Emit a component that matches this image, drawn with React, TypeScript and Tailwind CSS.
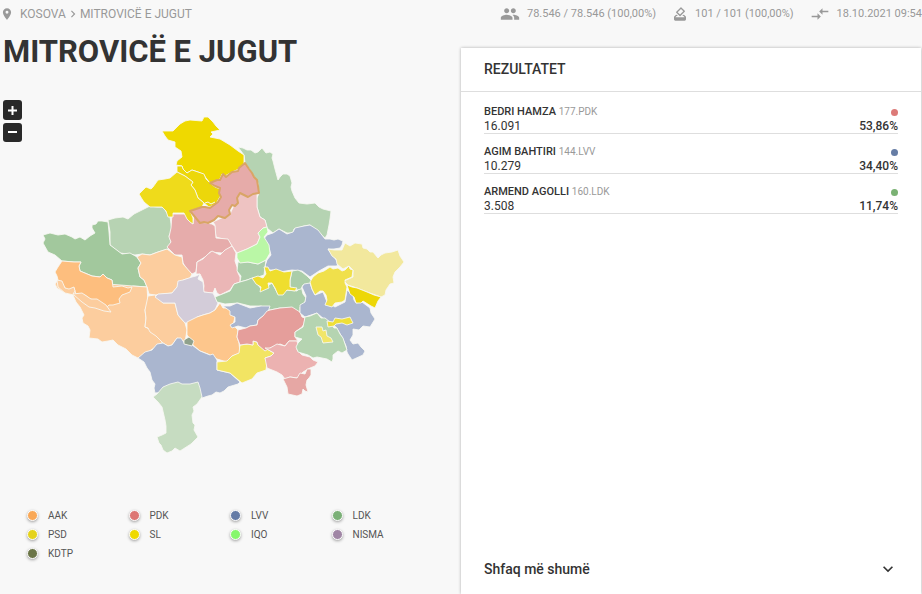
import { clsx } from 'clsx';
import { MdChevronRight, MdCompareArrows, MdExpandMore, MdHowToVote, MdPeople, MdPlace } from 'react-icons/md';

// ─────────────────────────────────────────────────────────────────────────────
// Data
// ─────────────────────────────────────────────────────────────────────────────

const STATS = [
  { icon: MdPeople, text: '78.546 / 78.546 (100,00%)', size: 'size-5' },
  { icon: MdHowToVote, text: '101 / 101 (100,00%)', size: 'size-4' },
  { icon: MdCompareArrows, text: '18.10.2021 09:54', size: 'size-5' },
];

const RESULTS = [
  { name: 'BEDRI HAMZA', list: '177.PDK', votes: '16.091', share: '53,86%', dot: 'bg-[#dc7a78]' },
  { name: 'AGIM BAHTIRI', list: '144.LVV', votes: '10.279', share: '34,40%', dot: 'bg-[#667da5]' },
  { name: 'ARMEND AGOLLI', list: '160.LDK', votes: '3.508', share: '11,74%', dot: 'bg-[#7bb274]' },
];

const PARTIES = [
  { label: 'AAK', dot: 'bg-[#f9a857]' },
  { label: 'PDK', dot: 'bg-[#dd7674]' },
  { label: 'LVV', dot: 'bg-[#647ba6]' },
  { label: 'LDK', dot: 'bg-[#7bb077]' },
  { label: 'PSD', dot: 'bg-[#e5d31c]' },
  { label: 'SL', dot: 'bg-[#efd900]' },
  { label: 'IQO', dot: 'bg-[#86f76c]' },
  { label: 'NISMA', dot: 'bg-[#a086a5]' },
  { label: 'KDTP', dot: 'bg-[#6b7547]' },
];

// Drawn in order: later shapes cover the edges of earlier ones.
const REGIONS = [
  { name: 'Podujevë', fill: '#b5d3b2', points: '238,147 243,148 247,150 251,150 255,153 258,152 262,148 266,153 270,152 273,154 272,158 273,161 275,169 278,180 280,177 283,174 287,174 290,176 292,183 291,187 292,191 295,198 299,203 307,204 315,203 319,207 323,209 331,211 330,219 329,225 327,235 325,238 310,225 304,226 294,229 293,233 287,233 279,229 273,233 267,228 265,220 260,217 257,207 257,198 259,193 258,183 250,170 245,163 244,155' },
  { name: 'Vushtrri', fill: '#eec3c2', points: '213,222 215,225 215,230 216,237 223,239 228,240 232,246 237,253 247,249 257,244 260,237 258,233 263,228 267,227 265,220 260,217 257,207 257,198 257,192 240,192 230,214' },
  { name: 'Istog', fill: '#b7d3b3', points: '108,220 115,218 123,217 128,219 134,214 142,210 150,206 157,207 163,207 167,213 170,217 172,230 169,236 171,242 168,249 158,252 150,255 142,254 135,255 120,253 110,245 110,232' },
  { name: 'Skenderaj', fill: '#e6acab', points: '172,214 185,214 188,220 193,224 194,214 200,222 212,224 215,226 216,238 228,239 232,246 228,249 222,253 210,252 208,255 197,262 196,272 192,274 187,269 183,263 182,255 175,255 170,250 167,247 171,242 169,237 171,228' },
  { name: 'Drenas', fill: '#ebb6b6', points: '197,262 203,259 208,254 212,251 220,255 225,250 232,246 236,253 235,261 237,267 238,273 240,277 240,282 234,284 230,290 220,295 217,293 215,288 213,293 203,292 204,286 203,280 200,274 196,274' },
  { name: 'Pejë', fill: '#a2c89d', points: '43,235 50,233 58,235 65,234 72,237 75,239 80,237 85,240 90,236 95,233 92,228 92,225 96,224 98,221 102,221 108,222 109,232 110,245 122,254 130,253 137,257 141,263 138,268 140,277 144,280 147,287 133,286 128,288 122,286 113,287 112,280 107,278 103,274 100,277 92,276 80,271 79,266 81,262 74,262 62,261 55,255 48,252 43,243 45,239' },
  { name: 'Klinë', fill: '#fccd9e', points: '137,257 142,254 150,255 158,252 167,249 171,252 175,255 182,257 183,264 192,274 190,278 183,280 172,293 155,295 149,294 147,287 144,280 140,277 138,268 141,263' },
  { name: 'Gjakovë', fill: '#fccd9e', points: '58,280 55,284 57,288 65,293 73,295 76,302 80,307 84,315 82,318 83,323 88,326 90,330 89,338 98,339 102,342 108,341 113,340 118,345 126,349 132,355 138,358 148,352 160,344 163,342 152,330 145,327 146,318 145,310 148,302 147,287 133,286' },
  { name: 'Deçan', fill: '#fdbe7e', points: '62,261 74,262 81,262 79,266 80,271 92,276 100,277 103,274 107,278 112,280 113,287 122,286 128,288 132,287 130,292 122,295 119,299 120,303 113,305 109,305 107,307 101,303 95,300 90,299 85,295 76,294 74,288 67,291 63,285 58,280 57,276 55,272 58,267' },
  { name: 'Junik', fill: '#fccd9e', points: '57,280 62,281 65,288 69,289 74,287 75,291 73,294 82,293 91,299 97,299 106,305 111,312 104,311 95,308 89,307 82,302 74,295 65,293 58,287' },
  { name: 'Rahovec', fill: '#fccd9e', points: '148,296 155,295 163,303 175,303 178,315 185,323 187,330 185,342 177,338 172,345 168,346 163,343 156,336 150,332 148,328 145,327 146,318 145,310' },
  { name: 'Malishevë', fill: '#d3ccd9', points: '200,274 198,279 203,282 204,292 213,293 215,297 218,303 215,310 210,313 203,315 197,317 194,321 190,323 185,323 178,315 175,303 163,303 155,297 158,294 172,293 177,287 178,281 183,280 192,277 196,276' },
  { name: 'Suharekë', fill: '#fdc68c', points: '187,322 197,317 203,315 210,313 215,310 220,303 223,308 230,308 235,317 233,325 238,330 237,337 239,343 240,353 232,356 227,362 217,359 208,354 200,351 193,345 192,341 187,335' },
  { name: 'Prizren', fill: '#aab6cf', points: '138,358 145,352 152,350 157,344 163,343 168,346 172,345 177,338 181,338 185,344 192,345 200,351 210,355 213,354 217,360 217,370 230,373 240,382 238,384 228,387 224,391 220,393 216,392 212,395 208,396 202,398 198,390 155,393 154,388 155,384 152,380 150,372 147,368 144,362' },
  { name: 'Mamushë', fill: '#8fa18c', points: '184,340 189,337 194,341 192,346 184,344' },
  { name: 'Dragash', fill: '#c6dcc1', points: '153,397 157,394 163,387 170,384 178,382 182,384 190,384 198,382 200,388 202,397 197,404 193,407 194,411 192,415 193,423 195,425 194,430 198,437 191,444 180,451 175,448 172,451 167,453 163,450 161,445 159,443 157,437 162,435 166,433 166,426 165,420 162,407 158,402' },
  { name: 'Shtërpcë', fill: '#f2e463', points: '217,362 227,361 232,356 239,353 240,345 248,344 253,345 253,341 257,342 258,345 265,348 274,353 271,356 265,358 267,362 266,370 260,372 257,373 252,379 242,383 230,373 217,370' },
  { name: 'Prishtinë', fill: '#aab6cf', points: '263,240 267,235 273,233 279,229 287,234 293,232 295,228 304,226 310,225 318,230 325,239 330,239 334,240 338,239 343,241 342,245 340,248 334,249 328,249 333,256 338,262 337,266 328,266 319,271 310,277 302,271 292,270 286,271 280,272 273,270 267,270 265,266 267,260 271,255 269,248' },
  { name: 'Kamenicë', fill: '#f2e89d', points: '328,249 334,250 342,250 345,243 350,246 355,243 362,244 363,248 367,249 370,252 373,252 378,258 381,255 385,253 392,252 398,250 400,256 404,262 400,267 395,272 393,277 394,283 390,284 386,290 385,295 381,297 367,292 357,288 348,285 344,281 353,277 353,270 349,266 343,269 337,264 336,259 332,256' },
  { name: 'Fushë Kosovë', fill: '#abcda9', points: '238,262 248,262 258,264 266,260 265,267 264,275 258,277 253,278 247,280 240,282 241,276 237,271' },
  { name: 'Lipjan', fill: '#abcda9', points: '215,297 220,295 230,291 234,284 240,282 247,280 252,278 258,285 262,290 272,283 278,294 287,290 297,291 301,286 303,294 306,298 305,302 300,307 300,312 296,311 292,308 280,308 270,310 261,306 250,306 238,303 225,304 217,302' },
  { name: 'Janjevë', fill: '#abcda9', points: '292,271 298,270 302,272 307,276 312,281 308,285 303,285 301,289 297,290 290,287 290,280' },
  { name: 'Graçanicë', fill: '#efde2e', points: '252,278 258,276 263,278 266,274 264,267 268,267 270,271 276,269 284,272 292,271 290,280 290,287 297,288 295,291 287,290 283,295 278,295 275,288 272,283 268,283 269,288 260,292 261,287 256,284' },
  { name: 'Obiliq', fill: '#baf7a6', points: '237,253 247,249 257,244 260,237 258,233 263,228 267,227 268,232 264,237 269,245 270,253 266,260 258,264 248,262 240,263 237,258' },
  { name: 'Shtime', fill: '#aab6cf', points: '223,306 230,306 237,303 250,308 261,306 270,306 268,312 263,316 258,320 257,325 250,326 246,328 238,326 232,328 230,325 235,322 235,317 230,315 230,311' },
  { name: 'Ferizaj', fill: '#e59e9b', points: '238,330 246,328 250,326 257,325 258,320 263,316 267,311 270,310 280,308 292,307 300,312 302,317 305,318 304,324 302,327 295,332 295,337 298,341 289,341 285,346 280,344 270,348 265,351 258,345 257,342 253,341 253,345 247,344 240,345 237,337' },
  { name: 'Kaçanik', fill: '#ecb2b1', points: '274,353 265,348 270,348 277,344 285,346 289,341 297,341 298,345 297,350 302,355 310,357 313,360 318,362 315,366 310,368 303,372 297,378 290,377 285,379 282,375 277,372 267,368 265,358 271,356' },
  { name: 'Hani i Elezit', fill: '#e6a7a4', points: '283,379 290,377 297,378 300,373 305,374 307,369 311,369 311,375 309,378 307,380 306,385 308,392 305,391 303,389 302,394 297,396 288,394 287,387' },
  { name: 'Gjilan', fill: '#aab6cf', points: '302,287 304,284 310,283 312,289 315,295 323,292 327,302 335,307 345,302 347,290 353,295 354,300 356,303 362,302 370,308 371,313 375,319 370,327 363,326 359,330 353,329 353,335 350,340 353,344 358,343 361,347 365,351 363,355 352,360 348,354 347,352 346,346 342,337 336,327 325,320 317,313 305,317 300,313 300,305 305,302 306,296' },
  { name: 'Novobërdë', fill: '#f0e04b', points: '310,282 313,277 318,273 324,271 330,267 333,269 338,268 342,271 345,270 349,266 350,269 353,270 352,277 345,280 345,283 347,287 345,300 342,302 335,303 332,307 325,305 327,300 326,295 323,291 320,291 315,295 312,289' },
  { name: 'Ranillug', fill: '#edd707', points: '347,285 352,287 357,288 367,292 374,295 381,297 378,301 375,308 371,306 363,301 361,303 356,303 354,297 350,294' },
  { name: 'Viti', fill: '#b5d4b1', points: '305,317 310,316 317,313 321,318 325,318 330,322 334,328 337,328 340,334 343,338 345,344 347,350 342,353 338,351 333,355 333,359 332,362 327,359 317,357 313,358 308,355 298,352 296,347 298,343 302,339 295,337 295,332 303,327' },
  { name: 'Kllokot', fill: '#f2e669', points: '316,327 322,327 323,331 326,330 327,336 331,338 333,342 323,343 321,337 318,335' },
  { name: 'Partesh', fill: '#efdf38', points: '327,321 333,322 335,318 342,319 350,317 353,323 347,325 342,323 336,324 334,326 328,327' },
  { name: 'Leposaviq', fill: '#efd900', points: '162,131 173,131 180,124 185,121 190,120 202,121 204,117 208,117 213,122 216,126 220,130 211,132 213,134 210,137 220,139 230,145 238,151 244,155 244,163 239,169 232,172 225,176 222,174 220,179 210,183 206,178 203,174 198,172 192,170 187,173 183,169 182,166 176,165 177,161 182,157 181,151 175,147 175,142 168,140 165,136' },
  { name: 'Zveçan', fill: '#ecd70a', points: '177,166 182,166 183,169 187,173 192,170 198,172 204,174 206,179 210,183 215,187 220,189 221,195 217,202 214,205 209,207 204,203 198,198 195,190 191,185 193,182 185,176 177,172' },
  { name: 'Zubin Potok', fill: '#efdb1b', points: '177,172 170,178 165,179 158,180 153,187 151,189 146,187 139,194 142,199 144,202 150,207 162,207 166,211 168,217 173,217 173,213 184,213 187,219 190,222 193,224 193,218 190,211 202,207 204,203 198,198 195,190 191,185 193,182 185,176' },
];

const SELECTED_REGION = '190,211 196,209 202,207 205,207 210,208 214,205 218,202 221,197 219,193 220,188 215,186 210,183 217,180 220,180 223,174 226,177 232,172 238,171 239,168 245,163 249,169 252,173 254,177 257,180 258,186 259,193 253,194 248,197 244,195 240,193 237,198 238,203 235,206 232,205 229,210 230,214 225,218 218,216 214,220 208,223 204,222 200,223 195,217';

// ─────────────────────────────────────────────────────────────────────────────
// Sub-components
// ─────────────────────────────────────────────────────────────────────────────

const KosovoMap = () => (
  <svg viewBox="40 110 370 350" className="block h-auto w-full" role="img" aria-label="Komunat e Kosovës">
    <g stroke="#f8f8f3" strokeOpacity="0.85" strokeWidth="1" strokeLinejoin="round">
      {REGIONS.map(({ name, fill, points }) => (
        <polygon key={name} points={points} fill={fill} />
      ))}
    </g>
    <polyline points="205,203 208,202 211,204 215,202" fill="none" stroke="#f8f8f3" />
    <polygon points={SELECTED_REGION} fill="#e6aba9" stroke="#d9a566" strokeWidth="2" strokeLinejoin="round" />
  </svg>
);

const ZoomControls = () => (
  <div className="flex w-5 flex-col gap-[3px]">
    <button type="button" aria-label="Zmadho" className="flex h-5 w-[19px] items-center justify-center rounded-[3px] bg-[#292929] text-white">
      <svg width="9" height="9" viewBox="0 0 9 9" aria-hidden="true">
        <path d="M4.5 0v9M0 4.5h9" stroke="currentColor" strokeWidth="2" />
      </svg>
    </button>
    <button type="button" aria-label="Zvogëlo" className="flex h-[19px] w-[19px] items-center justify-center rounded-[3px] bg-[#292929] text-white">
      <svg width="9" height="9" viewBox="0 0 9 9" aria-hidden="true">
        <path d="M0 4h9" stroke="currentColor" strokeWidth="2" />
      </svg>
    </button>
  </div>
);

const Legend = () => (
  <ul className="grid grid-cols-4 gap-y-1 pr-7 pl-6">
    {PARTIES.map(({ label, dot }) => (
      <li key={label} className="flex h-[15px] items-center gap-2.5 text-[10px] text-[#555]">
        <span className={clsx('size-[11px] shrink-0 rounded-full border border-white shadow-[0_1px_3px_rgba(0,0,0,0.35)]', dot)} />
        {label}
      </li>
    ))}
  </ul>
);

const Results = () => (
  <section className="flex flex-1 flex-col bg-white shadow-[0_0_3px_rgba(0,0,0,0.3)]">
    <h2 className="border-b border-[#dedede] px-[23px] pt-[11px] pb-3 text-sm leading-5 font-medium text-[#333]">
      REZULTATET
    </h2>

    <ul className="flex flex-col gap-2.5 px-[23px] pt-3">
      {RESULTS.map(({ name, list, votes, share, dot }) => (
        <li key={name} className="border-b border-[#dedede] text-[#333]">
          <div className="flex h-4 items-center justify-between">
            <p className="text-[11px] font-medium">
              {name} <span className="text-[10px] font-normal text-[#999]">{list}</span>
            </p>
            <span className={clsx('size-[7px] rounded-full', dot)} />
          </div>
          <div className="flex items-center justify-between pb-px text-xs leading-3">
            <span>{votes}</span>
            <span className="font-medium">{share}</span>
          </div>
        </li>
      ))}
    </ul>

    <button type="button" className="mt-auto flex items-center justify-between px-[23px] pt-3 pb-[15px] text-sm font-medium text-[#333]">
      Shfaq më shumë
      <MdExpandMore className="size-5" />
    </button>
  </section>
);

// ─────────────────────────────────────────────────────────────────────────────
// Page
// ─────────────────────────────────────────────────────────────────────────────

const App = () => (
  <div className="flex min-h-screen flex-col bg-[#f8f8f8] font-[Roboto,sans-serif]">
    <header className="flex h-7 items-center justify-between text-[#999]">
      <nav aria-label="Vendndodhja" className="flex items-center text-xs">
        <MdPlace className="mr-1.5 size-3.5" />
        <a href="#kosova">KOSOVA</a>
        <MdChevronRight className="size-3.5" />
        <a href="#mitrovice-e-jugut">MITROVICË E JUGUT</a>
      </nav>
      <div className="flex items-center gap-4 text-[11px]">
        {STATS.map(({ icon: Icon, text, size }) => (
          <span key={text} className="flex items-center gap-[7px] whitespace-nowrap">
            <Icon className={size} />
            {text}
          </span>
        ))}
      </div>
    </header>

    <main className="flex flex-1">
      <div className="w-1/2 pl-[3px]">
        <h1 className="pt-1 text-[31px] leading-10 font-bold text-[#333]">MITROVICË E JUGUT</h1>
        <div className="flex pt-7">
          <ZoomControls />
          <div className="flex-1 pt-2.5 pr-[51px] pl-[17px]">
            <KosovoMap />
          </div>
        </div>
        <div className="pt-12">
          <Legend />
        </div>
      </div>

      <div className="flex w-1/2 flex-col pt-5 pr-px">
        <Results />
      </div>
    </main>
  </div>
);

export default App;
